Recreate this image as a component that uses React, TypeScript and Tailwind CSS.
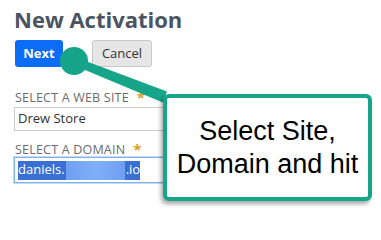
const Label = ({ text }: { text: string }) => (
  <div className="flex items-start text-[12.5px] leading-[15px] tracking-[0.2px] text-[#6b6b6b]">
    <span>{text}</span>
    <span className="ml-[8px] text-[15px] leading-[14px] font-bold text-[#d9a021]">*</span>
  </div>
)

const Callout = () => (
  <>
    <svg className="pointer-events-none absolute left-0 top-0" width="381" height="208">
      <polygon points="75.5,57.3 167,91.4 162.8,102.6 72.5,64.7" fill="#17a589" />
      <circle cx="74" cy="61" r="14" fill="#17a589" />
    </svg>
    <div className="absolute left-[163px] top-[94px] flex h-[107px] w-[209px] flex-col items-center justify-center rounded-[6px] border-4 border-[#17a589] bg-white shadow-[-2px_3px_4px_rgba(0,0,0,0.35)]">
      <p className="text-center font-['Liberation_Sans',Arial,sans-serif] text-[27px] leading-[33px] text-black">
        Select Site,
        <br />
        Domain and hit
      </p>
    </div>
  </>
)

export default function App() {
  return (
    <div className="relative h-[208px] w-[381px] overflow-hidden bg-white font-['Open_Sans',sans-serif]">
      <div className="flex flex-col pl-[14px] pt-[5px]">
        <h1 className="text-[22px] font-bold leading-[28px] text-[#4a5463]">New Activation</h1>

        <div className="mt-[7px] flex items-center gap-[29px] pl-px">
          <button className="h-[27px] w-[48px] rounded-[3px] bg-[#0b6cf5] text-[13px] font-bold text-white">
            Next
          </button>
          <button className="h-[27px] w-[60px] rounded-[3px] border border-[#c8c8c8] bg-[#e6e6e6] text-[13px] text-[#333]">
            Cancel
          </button>
        </div>

        <div className="mt-[23px] pl-px">
          <Label text="SELECT A WEB SITE" />
        </div>
        <div className="mt-[2px] flex h-[24px] w-[170px] items-center border border-[#cccccc] pl-[3px] text-[13px] text-[#333]">
          Drew Store
        </div>

        <div className="mt-[11px] pl-px">
          <Label text="SELECT A DOMAIN" />
        </div>
        <div className="flex h-[26px] w-[170px] items-center border border-[#7fb0ec] pl-[3px] shadow-[0_0_0_1px_rgba(127,176,236,0.45)]">
          <span className="flex h-[19px] items-center bg-[#3a6fd4] text-[13px] text-white">
            daniels.
            <span className="mx-[1px] h-[19px] w-[59px] bg-gradient-to-r from-[#6f9ef2] via-[#7fb0f7] to-[#6f9ef2]" />
            .io
          </span>
        </div>
      </div>

      <Callout />
    </div>
  )
}
